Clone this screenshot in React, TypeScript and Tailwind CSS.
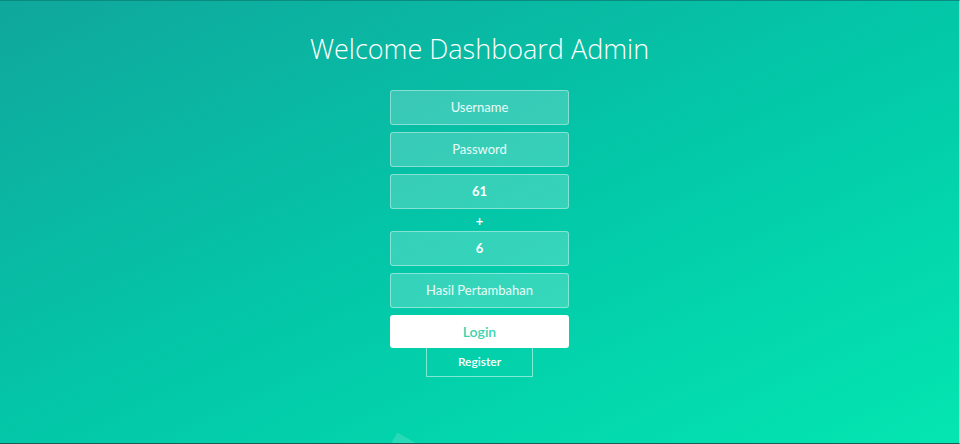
export default function App() {
  const fields = ['Username', 'Password'];

  return (
    <div className="relative w-[960px] h-[444px] overflow-hidden bg-gradient-to-br from-[#0fa79c] via-[#03c7a8] to-[#04e6b1] border-t border-t-[#0b8a80] border-b border-b-[#1d5c52] border-r border-r-[#7de8d2] font-['Lato',sans-serif]">
      <div className="flex flex-col items-center">
        <h1 className="mt-[25px] h-[45px] text-[27px] leading-[45px] font-light text-white font-['Open_Sans',sans-serif]">
          Welcome Dashboard Admin
        </h1>

        <form className="mt-[19px] flex flex-col items-center w-[179px]">
          {fields.map((f) => (
            <div
              key={f}
              className="w-full h-[35px] mb-[7px] flex items-center justify-center rounded-[3px] border border-white/40 bg-white/20 text-[13px] text-white/90"
            >
              {f}
            </div>
          ))}
          <div className="w-full h-[35px] flex items-center justify-center rounded-[3px] border border-white/40 bg-white/20 text-[13px] font-bold text-white">
            61
          </div>
          <div className="h-[22px] flex items-center justify-center text-[13px] font-bold text-white leading-none pt-[2px]">
            +
          </div>
          <div className="w-full h-[35px] mb-[7px] flex items-center justify-center rounded-[3px] border border-white/40 bg-white/20 text-[13px] font-bold text-white">
            6
          </div>
          <div className="w-full h-[35px] mb-[7px] flex items-center justify-center rounded-[3px] border border-white/40 bg-white/20 text-[13px] text-white/90">
            Hasil Pertambahan
          </div>
          <button
            type="button"
            className="w-full h-[33px] flex items-center justify-center rounded-[3px] bg-white text-[14px] font-semibold text-[#3dd3ad]"
          >
            Login
          </button>
          <button
            type="button"
            className="w-[107px] h-[29px] flex items-center justify-center border border-white/50 border-t-0 text-[12px] font-semibold text-white"
          >
            Register
          </button>
        </form>
      </div>

      <div className="absolute left-[388px] top-[437px] w-[30px] h-[30px] rotate-[30deg] bg-white/15" />
    </div>
  );
}
